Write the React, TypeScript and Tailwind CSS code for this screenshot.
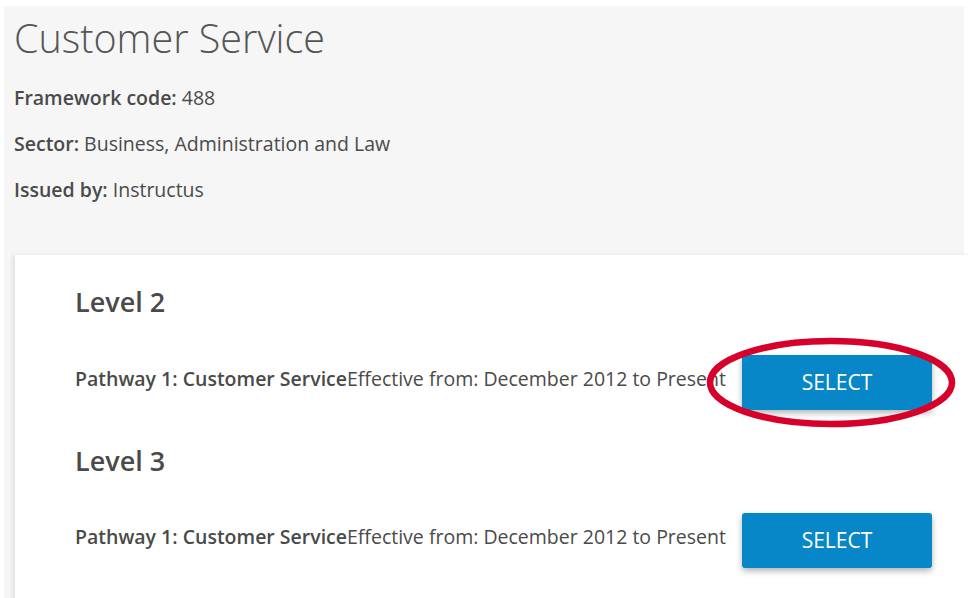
const font = { fontFamily: '"Open Sans", "Liberation Sans", sans-serif' };

function PathwayRow() {
  return (
    <div className="flex items-center">
      <p className="w-[667px] shrink-0 pb-2 text-[19.5px] leading-[26px] text-[#4a4a4a]">
        <span className="font-semibold">Pathway 1: Customer Service</span>
        Effective from: December 2012 to Present
      </p>
      <button className="h-[55px] w-[190px] rounded-[3px] bg-[#0786c8] text-[21px] text-white shadow-[0_3px_6px_rgba(0,0,0,0.3)]">
        SELECT
      </button>
    </div>
  );
}

export default function App() {
  return (
    <div className="relative h-[598px] w-[968px] overflow-hidden bg-white pl-1 pt-[6px]" style={font}>
      <div className="h-[600px] w-[960px] bg-[#f6f6f6]">
        {/* header */}
        <div className="px-[10px] pt-2 pb-[52px] text-[#4a4a4a]">
          <h1 className="text-[39.5px] font-light leading-[48px] text-[#555]">Customer Service</h1>
          <div className="mt-[23px] flex flex-col gap-[20px] text-[19.5px] leading-[26px]">
            <p>
              <span className="font-semibold">Framework code:</span> 488
            </p>
            <p>
              <span className="font-semibold">Sector:</span> Business, Administration and Law
            </p>
            <p>
              <span className="font-semibold">Issued by:</span> Instructus
            </p>
          </div>
        </div>

        {/* levels card */}
        <div className="ml-[11px] h-[400px] w-[960px] bg-white pl-[60px] pt-[31px] shadow-[-3px_0_4px_rgba(0,0,0,0.08)]">
          <h2 className="text-[27px] font-semibold leading-[32px] text-[#4a4a4a]">Level 2</h2>
          <div className="mt-[37px]">
            <PathwayRow />
          </div>
          <h2 className="mt-[35px] text-[27px] font-semibold leading-[32px] text-[#4a4a4a]">Level 3</h2>
          <div className="mt-[36px]">
            <PathwayRow />
          </div>
        </div>
      </div>

      {/* red annotation ring */}
      <svg className="pointer-events-none absolute left-0 top-0" width="968" height="598">
        <ellipse cx="831" cy="382.5" rx="121" ry="41.5" fill="none" stroke="#d7002b" strokeWidth="6.5" />
      </svg>
    </div>
  );
}
